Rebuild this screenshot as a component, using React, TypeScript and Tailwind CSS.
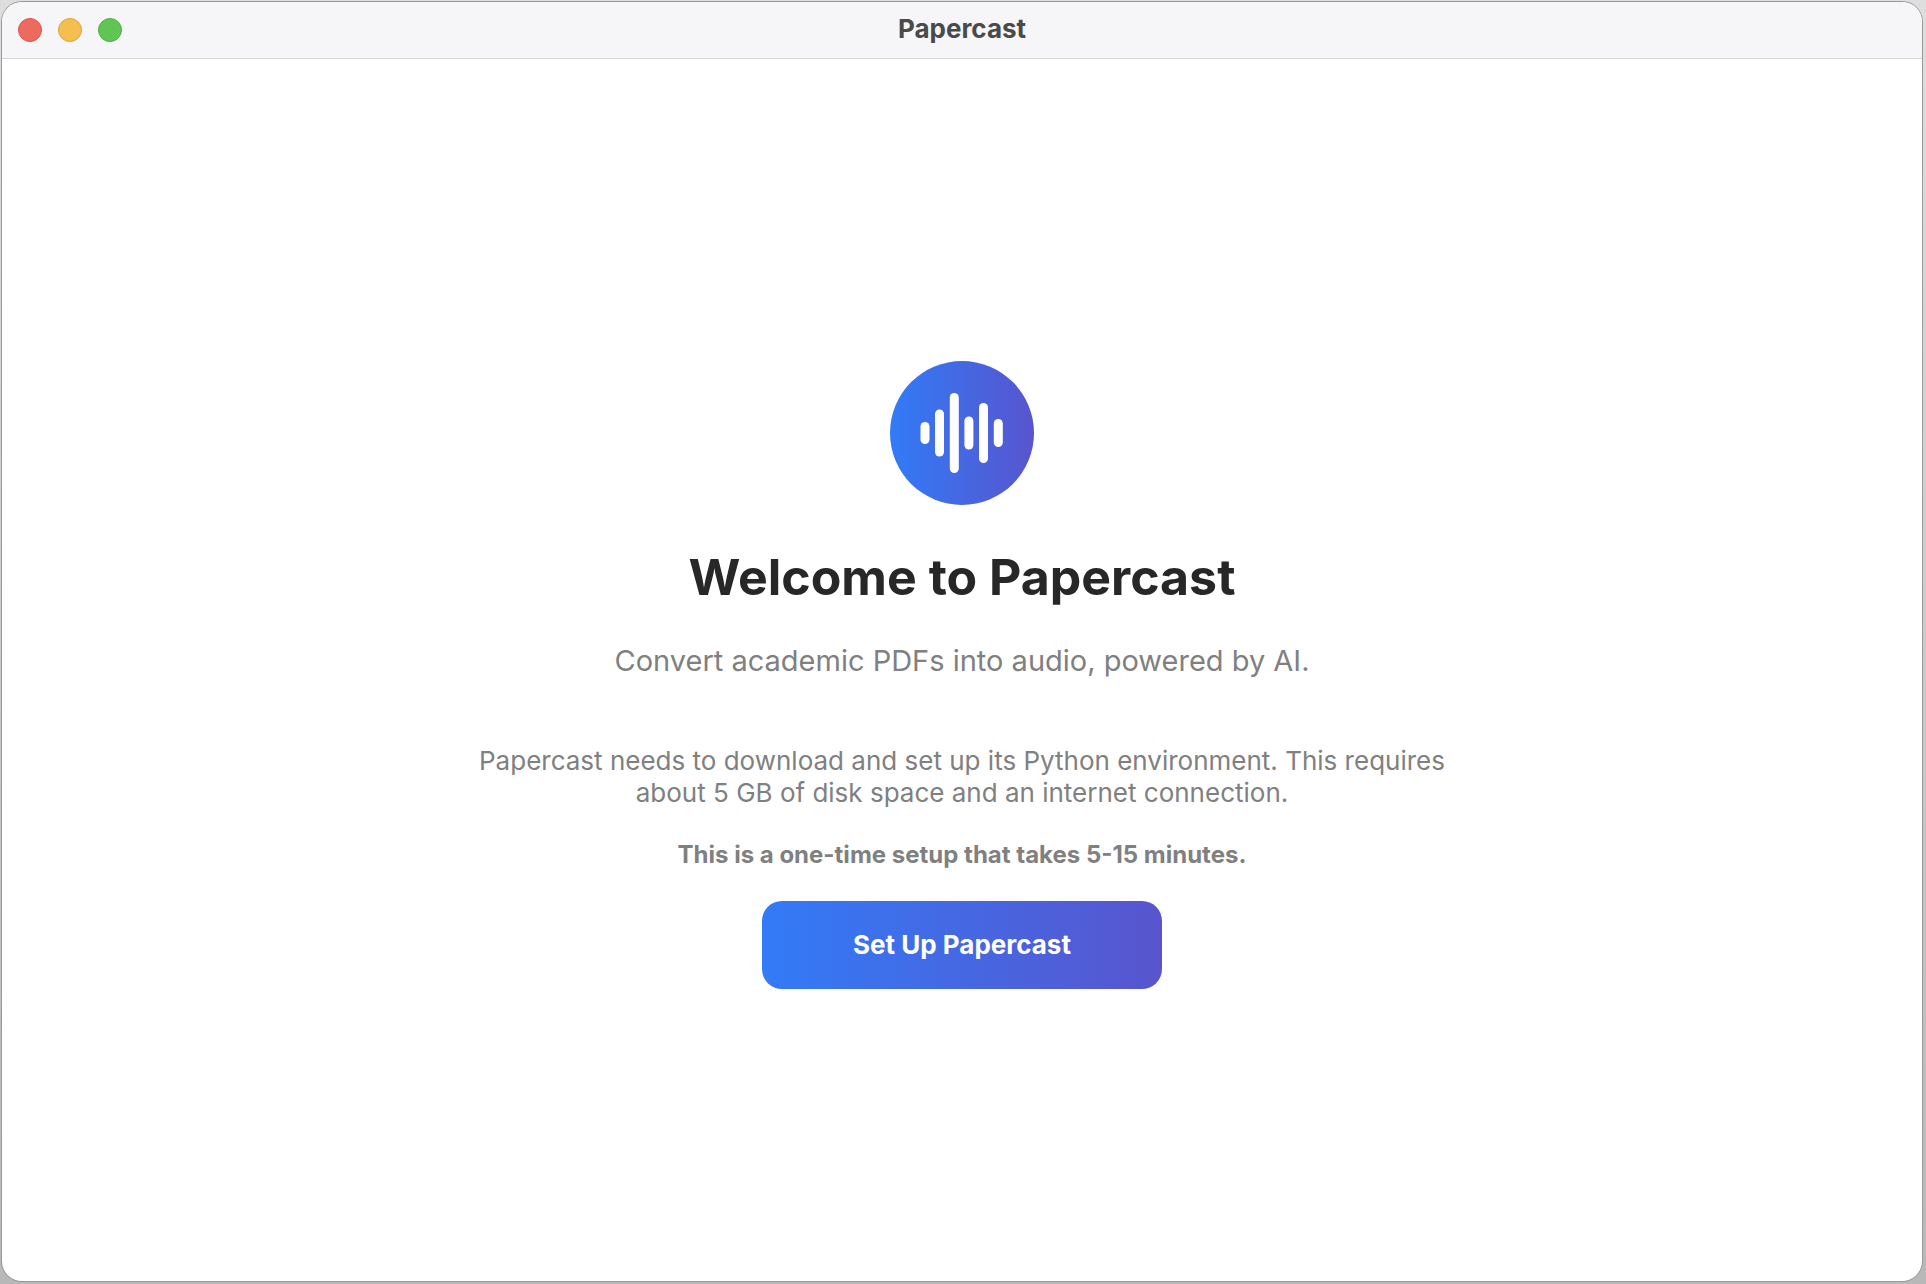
import React from 'react';

interface WindowControl {
  id: string;
  label: string;
  color: string;
}

const WINDOW_CONTROLS: WindowControl[] = [
  { id: 'close', label: 'Close window', color: 'bg-[#ec6a5e] border-[#d95850]' },
  { id: 'minimize', label: 'Minimize window', color: 'bg-[#f4bf4f] border-[#d9a445]' },
  { id: 'zoom', label: 'Zoom window', color: 'bg-[#61c554] border-[#53ab47]' },
];

// x offset and height of each bar, all centered on y=72
const BARS = [
  { x: 30.5, height: 22 },
  { x: 45, height: 47 },
  { x: 59.8, height: 80 },
  { x: 74.4, height: 33 },
  { x: 89, height: 60 },
  { x: 103.8, height: 28 },
];

const TitleBar = () => (
  <header className="grid h-[57px] grid-cols-3 items-center border-b border-[#d6d6d8] bg-[#f6f6f9] px-4">
    <div className="flex gap-4">
      {WINDOW_CONTROLS.map(control => (
        <button
          key={control.id}
          type="button"
          aria-label={control.label}
          className={`size-6 rounded-full border ${control.color}`}
        />
      ))}
    </div>
    <h1 className="pb-[2px] text-center text-[26px] leading-8 font-bold text-[#4a4a4a]">Papercast</h1>
  </header>
);

const Logo = () => (
  <svg viewBox="0 0 144 144" className="size-36" aria-hidden="true">
    <defs>
      <linearGradient id="logo-fill" x1="0" y1="0" x2="1" y2="0">
        <stop offset="0" stopColor="#327bf7" />
        <stop offset="1" stopColor="#5855ce" />
      </linearGradient>
    </defs>
    <circle cx="72" cy="72" r="72" fill="url(#logo-fill)" />
    {BARS.map(bar => (
      <rect key={bar.x} x={bar.x} y={72 - bar.height / 2} width="9" height={bar.height} rx="4.5" fill="#fff" />
    ))}
  </svg>
);

const WelcomeScreen = () => (
  <main className="flex flex-1 flex-col items-center justify-center px-8 pt-[10px] text-center text-[#808080]">
    <Logo />
    <h2 className="mt-10 text-[50px] leading-16 font-bold text-[#272727]">Welcome to Papercast</h2>
    <p className="mt-8 text-[29px] leading-10">Convert academic PDFs into audio, powered by AI.</p>
    <p className="mt-16 max-w-[1000px] text-[26px] leading-8">
      Papercast needs to download and set up its Python environment. This requires about 5 GB of disk space and an
      internet connection.
    </p>
    <p className="mt-8 text-[24px] leading-7 font-bold">This is a one-time setup that takes 5-15 minutes.</p>
    <button
      type="button"
      className="mt-8 h-22 w-100 rounded-[20px] bg-linear-[90deg,#327bf7,#5855ce] text-[26px] leading-8 font-bold text-white"
    >
      Set Up Papercast
    </button>
  </main>
);

const App = () => (
  <div className="flex min-h-screen bg-linear-to-b from-[#dedede] to-[#b8b8b8] pt-[2px] pr-1 pb-[3px] pl-[2px] font-['Inter',sans-serif]">
    <div className="flex flex-1 flex-col overflow-hidden rounded-[20px] bg-white ring-1 ring-[#999999]">
      <TitleBar />
      <WelcomeScreen />
    </div>
  </div>
);

export default App;
